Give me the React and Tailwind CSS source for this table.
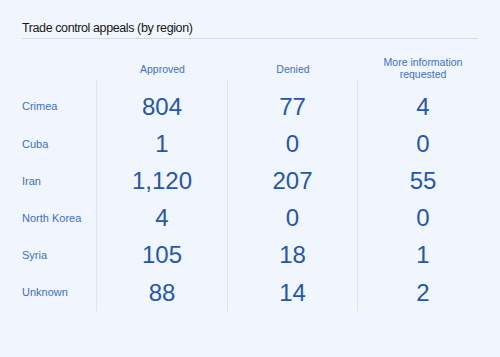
const rows = [
  { region: 'Crimea', approved: '804', denied: '77', more: '4' },
  { region: 'Cuba', approved: '1', denied: '0', more: '0' },
  { region: 'Iran', approved: '1,120', denied: '207', more: '55' },
  { region: 'North Korea', approved: '4', denied: '0', more: '0' },
  { region: 'Syria', approved: '105', denied: '18', more: '1' },
  { region: 'Unknown', approved: '88', denied: '14', more: '2' },
]

const Column = ({ field, last }) => (
  <div className={`flex flex-col pt-2 ${last ? '' : 'border-r border-[#dde4ee]'}`}>
    {rows.map((r) => (
      <div key={r.region} className="h-[37.2px] flex items-center justify-center text-[24px] leading-none text-[#2456b0]">
        {r[field]}
      </div>
    ))}
  </div>
)

const App = () => {
  return (
    <div className="w-[500px] h-[357px] bg-[#f1f6fe] px-[22px] pt-[21px] overflow-hidden" style={{ fontFamily: '"Liberation Sans", Arial, sans-serif' }}>
      <div className="border-b border-[#d6dce7] pb-[2px]">
        <h1 className="text-[12.5px] leading-[15px] text-[#161616] tracking-[-0.4px]">Trade control appeals (by region)</h1>
      </div>

      <div className="grid grid-cols-[75px_131px_130px_130px] w-[466px] mt-[18px]">
        <div></div>
        <div className="h-[23px] flex items-center justify-center text-[10.5px] leading-[12px] text-[#3d6fc5] text-center">Approved</div>
        <div className="h-[23px] flex items-center justify-center text-[10.5px] leading-[12px] text-[#3d6fc5] text-center">Denied</div>
        <div className="h-[23px] flex items-center justify-center text-[10.5px] leading-[11.5px] text-[#3d6fc5] text-center">More information<br />requested</div>

        <div className="flex flex-col pt-2">
          {rows.map((r) => (
            <div key={r.region} className="h-[37.2px] flex items-center text-[11px] text-[#3d6fc5]">
              {r.region}
            </div>
          ))}
        </div>
        <div className="border-l border-[#dde4ee] -ml-px">
          <Column field="approved" />
        </div>
        <Column field="denied" />
        <Column field="more" last />
      </div>
    </div>
  )
}

export default App
